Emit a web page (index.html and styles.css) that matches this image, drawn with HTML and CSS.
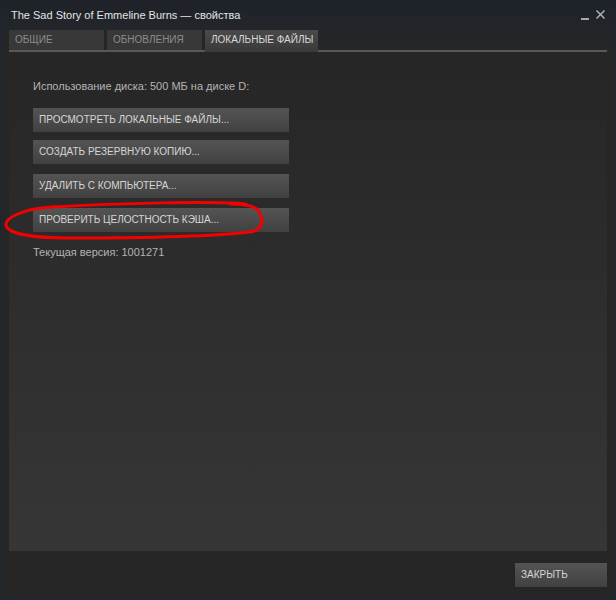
FILE: index.html
```html
<!DOCTYPE html>
<html>
<head>
<meta charset="utf-8">
<link rel="stylesheet" href="styles.css">
</head>
<body>
<div class="window">
  <div class="titlebar">
    <span class="title">The Sad Story of Emmeline Burns — свойства</span>
    <div class="controls">
      <span class="min"></span>
      <svg class="close-x" width="9" height="9" viewBox="0 0 9 9"><path d="M0.5 0.5 L8.5 8.5 M8.5 0.5 L0.5 8.5" stroke="#b8b8b8" stroke-width="1.4"/></svg>
    </div>
  </div>
  <div class="tabs">
    <div class="tab t1">Общие</div>
    <div class="tab t2">Обновления</div>
    <div class="tab t3 active">Локальные файлы</div>
  </div>
  <div class="panel">
    <div class="info">Использование диска: 500 МБ на диске D:</div>
    <div class="buttons">
      <div class="btn first">Просмотреть локальные файлы...</div>
      <div class="btn">Создать резервную копию...</div>
      <div class="btn">Удалить с компьютера...</div>
      <div class="btn">Проверить целостность кэша...</div>
    </div>
    <div class="version">Текущая версия: 1001271</div>
    <svg class="mark" width="270" height="50" viewBox="0 0 270 50"><path d="M246 9 C 215 6, 120 8, 52 12 C 20 14, 5 24, 6 30 C 7 38, 30 43, 70 43 C 140 43, 215 41, 250 37 C 265 35, 263 22, 258 15 C 253 10, 240 9, 230 9" fill="none" stroke="#f40000" stroke-width="3" stroke-linecap="round"/></svg>
  </div>
  <div class="footer">
    <div class="btn closebtn">Закрыть</div>
  </div>
</div>
</body>
</html>
```
FILE: styles.css
```css
html, body {
  margin: 0;
  padding: 0;
  background: #262626;
}
body {
  width: 616px;
  height: 600px;
  overflow: hidden;
  font-family: "Liberation Sans", Arial, sans-serif;
}
.window {
  width: 616px;
  height: 600px;
  box-sizing: border-box;
  background: linear-gradient(to bottom, #1e2229 0px, #22252a 25px, #262626 55px, #262626 100%);
  border-left: 1px solid #1a2636;
  border-right: 1px solid #1a2636;
  border-bottom: 1px solid #1a2a40;
  display: flex;
  flex-direction: column;
}
.titlebar {
  height: 30px;
  display: flex;
  align-items: flex-start;
  justify-content: space-between;
}
.title {
  color: #e2e4e5;
  font-size: 11px;
  padding-left: 10px;
  padding-top: 8px;
  line-height: 14px;
}
.controls {
  display: flex;
  align-items: flex-start;
  padding-right: 10px;
  padding-top: 10px;
  gap: 7px;
}
.min {
  width: 8px;
  height: 2px;
  background: #a8a8a8;
  margin-top: 8px;
}
.close-x {
  display: block;
}
.tabs {
  display: flex;
  gap: 3px;
  margin-left: 8px;
  margin-right: 8px;
  height: 20px;
  border-bottom: 2px solid #585858;
}
.tab {
  height: 20px;
  box-sizing: border-box;
  padding-left: 6px;
  font-size: 10px;
  line-height: 20px;
  white-space: nowrap;
  text-transform: uppercase;
  color: #8c8c8c;
  background: #383838;
}
.t1 { width: 95px; }
.t2 { width: 95px; }
.t3 { width: 113px; }
.tab.active {
  color: #d8d8d8;
  background: linear-gradient(to bottom, #4a4a4a, #3a3a3a);
  height: 22px;
}
.panel {
  position: relative;
  margin: 1px 8px 0 8px;
  height: 498px;
  background: linear-gradient(to bottom, #262626 0%, #2c2c2c 40%, #363636 100%);
  padding: 26px 0 0 24px;
  box-sizing: border-box;
}
.info {
  color: #b4b4b4;
  font-size: 11px;
  line-height: 14px;
}
.buttons {
  display: flex;
  flex-direction: column;
  gap: 10px;
  margin-top: 15px;
}
.btn {
  width: 256px;
  height: 24px;
  box-sizing: border-box;
  padding-left: 6px;
  font-size: 10px;
  line-height: 24px;
  white-space: nowrap;
  text-transform: uppercase;
  color: #d6d6d6;
  background: linear-gradient(to bottom, #545454, #414141);
}
.buttons .btn.first {
  margin-bottom: -2px;
}
.version {
  color: #b4b4b4;
  font-size: 11px;
  line-height: 14px;
  margin-top: 13px;
}
.mark {
  position: absolute;
  left: -9px;
  top: 142px;
}
.footer {
  display: flex;
  justify-content: flex-end;
  padding-right: 8px;
  padding-top: 12px;
}
.closebtn {
  width: 92px;
}
```
